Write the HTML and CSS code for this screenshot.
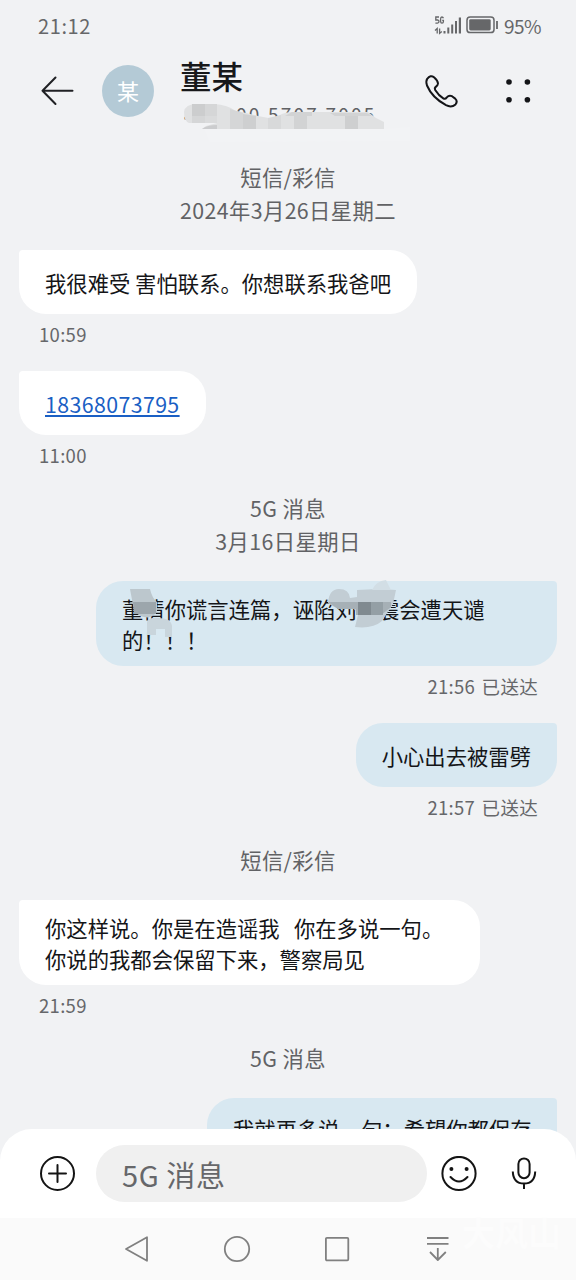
FILE: index.html
```html
<!DOCTYPE html>
<html lang="zh-CN">
<head>
<meta charset="utf-8">
<title>短信</title>
<link rel="stylesheet" href="styles.css">
</head>
<body>
<div class="phone">
  <div class="status">
    <span class="clock">21:12</span>
    <div class="status-right">
      <svg class="signal" width="28" height="20" viewBox="0 0 28 20">
        <g fill="none" stroke="#666769" stroke-width="1.3"><path d="M5 1H1.8V4H3.6Q5 4.2 5 5.6T3.4 7.2H1.4M9.4 2.2Q9 1 7.9 1Q6.6 1 6.6 3V5.2Q6.6 7.2 8 7.2Q9.4 7.2 9.4 5.4V4.4H8.2M1 14.4L3.2 12.4V17.4M5.6 12.4V17.4L7.8 15.4"/></g>
        <g fill="#666769"><rect x="9.5" y="15" width="2" height="2.5"/><rect x="13.3" y="11.5" width="2" height="6"/><rect x="17.2" y="8.5" width="2" height="9"/><rect x="21" y="5" width="2" height="12.5"/><rect x="24.8" y="1.5" width="2.2" height="16"/></g>
      </svg>
      <svg class="battery" width="33" height="18" viewBox="0 0 33 18"><rect x="1" y="1" width="27" height="15.6" rx="3.2" fill="none" stroke="#666769" stroke-width="1.5"/><rect x="3.2" y="3.2" width="21.5" height="11.2" rx="1.4" fill="#666769"/><path d="M31 5V13" stroke="#666769" stroke-width="1.8"/></svg>
      <span class="percent">95%</span>
    </div>
  </div>
  <header class="header">
    <svg class="back" width="34" height="32" viewBox="0 0 34 32" fill="none" stroke="#202124" stroke-width="2" stroke-linecap="round" stroke-linejoin="round"><path d="M14.5 2.5L1.5 15.7L14.5 29M1.5 15.7H31.5"/></svg>
    <div class="avatar">某</div>
    <div class="who">
      <div class="name">董某</div>
      <div class="number"><span class="code">+86</span><span class="digits">00 5707 7005</span>
        <svg class="smudge" width="232" height="44" viewBox="0 0 232 44">
          <path d="M24 28H206L230 26V40L30 41Z" fill="#f2f3f5"/>
          <path d="M0 7H8V15L4 16H0Z" fill="#f1f2f4"/>
          <path d="M4 11Q5 3 17 3H34Q48 4 56 10Q68 12 78 15L94 18Q102 11 112 11H188L196 17L204 21V28H22L26 25L37 22H9Q4 20 4 11Z" fill="#e0e1e2"/>
          <path d="M12 3H37V22H12Z" fill="#d5d6d7"/><path d="M12 3H25V15H12Z" fill="#cccdce"/><path d="M25 15H37V22H25Z" fill="#dadbdc"/>
          <path d="M22 28Q27 24 37 24V28Z" fill="#cbccce"/>
          <path d="M50 8L63 12V28H50Z" fill="#d5d6d7"/><path d="M63 13L76 15V28H63Z" fill="#cecfd0"/><path d="M88 17L101 14V28H88Z" fill="#d8d9da"/><path d="M114 15H127V28H114Z" fill="#d2d3d4"/><path d="M165 15H178V28H165Z" fill="#cecfd0"/><path d="M105 15L112 11H132V15ZM150 12H187L192 15H155Z" fill="#d2d3d4"/>
        </svg>
      </div>
    </div>
    <svg class="call" width="36" height="36" viewBox="0 0 36 36" fill="none" stroke="#141518" stroke-width="2" stroke-linejoin="round"><path d="M3.2 4.8Q6.5 .5 10 3.2Q13.8 6.5 14 9.5Q13.8 11.4 12 12.6Q10.2 14 11.2 16Q14.5 21.5 19.6 24.6Q21.4 25.4 22.8 23.4Q25 20.8 28 22.2L31.2 24.6Q34 27.4 31.5 30.4Q27.5 34 22 31.2Q8 23.5 3 11.5Q1.6 7.4 3.2 4.8Z"/></svg>
    <svg class="more" width="30" height="30" viewBox="0 0 30 30" fill="#141518"><circle cx="6" cy="6" r="2.8"/><circle cx="24.4" cy="6" r="2.8"/><circle cx="6" cy="23.7" r="2.8"/><circle cx="24.4" cy="23.7" r="2.8"/></svg>
  </header>
  <main class="thread">
    <div class="divider first"><p>短信/彩信</p><p>2024年3月26日星期二</p></div>
    <div class="bubble in">我很难受 害怕联系。你想联系我爸吧</div>
    <div class="stamp">10:59</div>
    <div class="bubble in"><a class="link">18368073795</a></div>
    <div class="stamp">11:00</div>
    <div class="divider"><p>5G 消息</p><p>3月16日星期日</p></div>
    <div class="bubble out wide">董情你谎言连篇，诬陷刘　震会遭天谴<br>的！！！
      <svg class="cover" width="310" height="60" viewBox="0 0 310 60">
        <path d="M34 8H54Q56 17 61 21L61 30Q57 38 48 36Q38 34 37 24Z" fill="#bcc7cd"/><path d="M37 21H60V33H38Z" fill="#9ca6ac"/><path d="M51 41Q53 36 62 37Q75 37 76 45V56H69V48H60V54H51Z" fill="#c9d5dc"/>
        <path d="M232 22Q233 8 243 8Q253 8 254 17L261 16V9L283 8L300 9L297 23L286 40Q277 48 259 46L262 34L256 25Q245 32 232 22Z" fill="#c2cdd4"/><path d="M276 9Q280 0 290 -1L295 9Z" fill="#d2dee5"/><path d="M232 21H295V26L285 34H260V28H242Z" fill="#a6b0b6"/><path d="M262 21H275V34H262Z" fill="#808a90"/><path d="M275 21H287V34H275Z" fill="#949fa5"/>
      </svg>
    </div>
    <div class="stamp right">21:56 已送达</div>
    <div class="bubble out">小心出去被雷劈</div>
    <div class="stamp right">21:57 已送达</div>
    <div class="divider"><p>短信/彩信</p></div>
    <div class="bubble in two">你这样说。你是在造谣我 &nbsp; 你在多说一句。<br>你说的我都会保留下来，警察局见</div>
    <div class="stamp">21:59</div>
    <div class="divider"><p>5G 消息</p></div>
    <div class="bubble out last">我就再多说一句：希望你都保存</div>
  </main>
  <div class="composer">
    <svg width="36" height="36" viewBox="0 0 36 36" fill="none" stroke="#141414" stroke-width="2"><circle cx="17.5" cy="17.5" r="16.5"/><path d="M9 17.5H26M17.5 9V26" stroke-linecap="round"/></svg>
    <div class="field">5G 消息</div>
    <svg class="smile" width="36" height="36" viewBox="0 0 36 36" fill="none" stroke="#141414" stroke-width="2"><circle cx="18" cy="17.5" r="16.6"/><path d="M9.5 21Q18 30 26.5 21" stroke-linecap="round"/><g fill="#141414" stroke="none"><circle cx="10.4" cy="13" r="2"/><circle cx="25.6" cy="13" r="2"/></g></svg>
    <svg class="mic" width="26" height="36" viewBox="0 0 26 36" fill="none" stroke="#141414" stroke-width="2"><rect x="7.4" y="2.4" width="11.2" height="19.8" rx="5.6"/><path d="M1.8 15.5Q2.2 27.6 13 27.6Q23.8 27.6 24.2 15.5M13 27.6V33"/></svg>
  </div>
  <nav class="nav">
    <svg width="28" height="28" viewBox="0 0 28 28"><path d="M3 14L24 2.2V25.8Z"/></svg>
    <svg width="28" height="28" viewBox="0 0 28 28"><circle cx="14" cy="14" r="12.2"/></svg>
    <svg width="28" height="28" viewBox="0 0 28 28"><rect x="2.9" y="2.9" width="22.4" height="22.4" rx="1"/></svg>
    <svg width="28" height="28" viewBox="0 0 28 28"><path d="M4 3H25.5M4 8.8H25.5M14.8 13V25M7 17L14.8 25L22.8 17"/></svg>
    <span class="mark">大风山</span>
  </nav>
</div>
</body>
</html>
```
FILE: styles.css
```css
* { box-sizing: border-box; }
body { margin: 0; background: #f1f2f4; font-family: "Noto Sans CJK SC", sans-serif; }
p { margin: 0; }
svg { display: block; flex: none; }
.phone { width: 576px; height: 1280px; overflow: hidden; display: flex; flex-direction: column; background: #f1f2f4; }

.status { height: 52px; flex: none; display: flex; justify-content: space-between; padding: 0 35px 0 38px; line-height: 51px; font-size: 20px; color: #666769; }
.clock { letter-spacing: .6px; }
.percent { width: 37px; font-size: 19px; letter-spacing: -.6px; white-space: nowrap; }
.status-right { display: flex; }
.signal { margin: 16px 4px 0 0; }
.battery { margin: 16px 5px 0 0; }

.header { height: 93px; flex: none; display: flex; padding-left: 41px; }
.back { margin-top: 23px; }
.avatar { width: 52px; height: 52px; margin: 13px 0 0 27px; border-radius: 50%; background: #b4cad6; color: #fff; font-size: 22px; line-height: 51px; text-align: center; flex: none; }
.who { width: 245px; margin-left: 26px; }
.name { height: 50px; line-height: 46px; font-size: 31.5px; font-weight: 500; color: #17181a; }
.number { position: relative; height: 22px; line-height: 24px; font-size: 19px; color: #606164; white-space: nowrap; }
.code { letter-spacing: .8px; }
.digits { margin-left: 22px; letter-spacing: 2.2px; }
.smudge { position: absolute; left: 0; top: -1px; }
.call { margin: 22px 0 0 -1px; }
.more { margin: 24px 0 0 43px; }

.thread { flex: 1; min-height: 0; margin-bottom: -32px; overflow: hidden; display: flex; flex-direction: column; align-items: flex-start; padding: 0 19px; font-size: 21.33px; line-height: 31px; color: #141518; white-space: nowrap; }
.divider { flex: none; align-self: center; margin: -1px 0 24px; text-align: center; color: #616265; line-height: 33px; font-size: 21.33px; letter-spacing: .4px; }
.divider.first { margin-top: 15px; }
.bubble { flex: none; min-height: 64px; padding: 17px 26px 16px; border-radius: 4px 27px 27px 27px; background: #fff; }
.bubble.out { position: relative; align-self: flex-end; border-radius: 27px 4px 27px 27px; background: #d8e8f1; }
.bubble.wide, .bubble.two { width: 461px; height: 85px; padding-top: 12px; }
.bubble.last { width: 350px; padding-top: 15px; }
.cover { position: absolute; left: 0; top: 0; overflow: visible; }
.link { color: #1a5fc4; text-decoration: underline; letter-spacing: .4px; }
.stamp { flex: none; height: 57px; padding: 5px 19px 0 20px; line-height: 30px; font-size: 18.5px; letter-spacing: .3px; color: #66676a; }
.stamp.right { align-self: flex-end; word-spacing: 2px; }

.composer { position: relative; height: 89px; flex: none; display: flex; align-items: center; padding: 0 39px 0 40px; border-radius: 32px 32px 0 0; background: #fff; }
.field { width: 333px; height: 57px; margin-left: 20px; padding-left: 26px; border-radius: 29px; background: #f0f0f0; color: #66676a; font-size: 29px; line-height: 58px; letter-spacing: .6px; }
.smile { margin-left: 14px; }
.mic { margin-left: 34px; }

.nav { position: relative; height: 62px; flex: none; display: flex; gap: 72px; padding: 17px 0 0 123px; background: #fafafa; fill: none; stroke: #808080; stroke-width: 1.8; stroke-linejoin: round; }
.mark { position: absolute; left: 462px; top: -6px; font-size: 33px; font-weight: 700; line-height: 40px; color: #fcfcfc; }
```
